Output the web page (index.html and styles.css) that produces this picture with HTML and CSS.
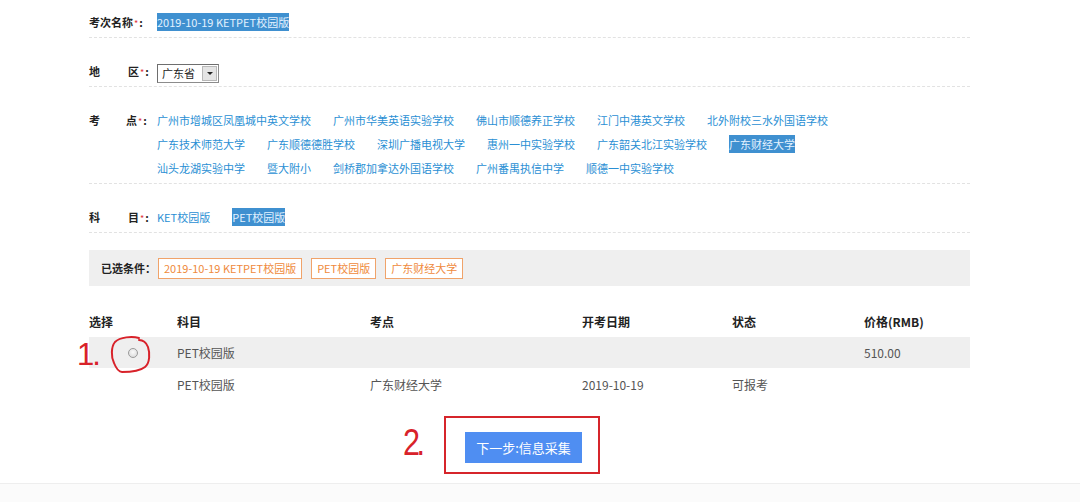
FILE: index.html
```html
<!DOCTYPE html>
<html lang="zh-CN">
<head>
<meta charset="utf-8">
<title>考次选择</title>
<link rel="stylesheet" href="styles.css">
</head>
<body>
<div class="page">
  <div class="form-row first">
    <div class="label">考次名称<span class="req">*</span>:</div>
    <div class="value"><span class="sel">2019-10-19 KETPET校园版</span></div>
  </div>
  <div class="form-row">
    <div class="label">地<span class="gap"></span>区<span class="req">*</span>:</div>
    <div class="value">
      <div class="select"><span class="select-text">广东省</span><span class="select-btn"><span class="tri"></span></span></div>
    </div>
  </div>
  <div class="form-row">
    <div class="label">考<span class="gap gap2"></span>点<span class="req">*</span>:</div>
    <div class="value links">
      <a class="lk">广州市增城区凤凰城中英文学校</a><a class="lk">广州市华美英语实验学校</a><a class="lk">佛山市顺德养正学校</a><a class="lk">江门中港英文学校</a><a class="lk">北外附校三水外国语学校</a><a class="lk">广东技术师范大学</a><a class="lk">广东顺德德胜学校</a><a class="lk">深圳广播电视大学</a><a class="lk">惠州一中实验学校</a><a class="lk">广东韶关北江实验学校</a><a class="lk"><span class="sel">广东财经大学</span></a><a class="lk">汕头龙湖实验中学</a><a class="lk">暨大附小</a><a class="lk">剑桥郡加拿达外国语学校</a><a class="lk">广州番禺执信中学</a><a class="lk">顺德一中实验学校</a>
    </div>
  </div>
  <div class="form-row">
    <div class="label">科<span class="gap"></span>目<span class="req">*</span>:</div>
    <div class="value links">
      <a class="lk">KET校园版</a><a class="lk"><span class="sel">PET校园版</span></a>
    </div>
  </div>

  <div class="chosen">
    <span class="chosen-label">已选条件：</span>
    <span class="tag">2019-10-19 KETPET校园版</span>
    <span class="tag">PET校园版</span>
    <span class="tag">广东财经大学</span>
  </div>

  <table class="tbl">
    <thead>
      <tr><th class="c1">选择</th><th class="c2">科目</th><th class="c3">考点</th><th class="c4">开考日期</th><th class="c5">状态</th><th class="c6">价格(RMB)</th></tr>
    </thead>
    <tbody>
      <tr class="grp"><td class="radio-cell"><span class="radio"></span></td><td>PET校园版</td><td></td><td></td><td></td><td>510.00</td></tr>
      <tr><td></td><td>PET校园版</td><td>广东财经大学</td><td>2019-10-19</td><td>可报考</td><td></td></tr>
    </tbody>
  </table>

  <div class="actions">
    <button class="btn">下一步:信息采集</button>
  </div>
</div>
<div class="footer"></div>

<div class="mark mark1">1.</div>
<svg class="circle-mark" width="46" height="40" viewBox="0 0 46 40">
  <path d="M31 3 C24 1 12 2 7 7 C3 12 3 22 6 28 C8 33 10 37 14 37 C20 37 32 36 37 32 C42 28 42 18 40 12 C38 7 35 5 31 5" fill="none" stroke="#d8222a" stroke-width="2" stroke-linecap="round"/>
</svg>
<div class="mark mark2">2.</div>
<div class="box-mark"></div>
</body>
</html>
```

FILE: styles.css
```css
html, body {
  margin: 0;
  padding: 0;
}
body {
  position: relative;
  background: #fff;
  font-family: "Noto Sans CJK SC", "Microsoft YaHei", sans-serif;
  font-size: 11px;
  color: #333;
  width: 1080px;
  height: 502px;
  overflow: hidden;
}
.page {
  width: 881px;
  margin-left: 89px;
}
.form-row {
  display: flex;
  padding: 21px 0 3px;
  line-height: 24px;
  border-bottom: 1px dashed #e2e2e2;
}
.form-row.first {
  padding-top: 10px;
}
.label {
  flex: none;
  width: 68px;
  font-weight: bold;
  color: #222;
  white-space: nowrap;
}
.req {
  color: #e0343a;
  font-weight: normal;
  font-size: 9px;
  line-height: 1;
  margin: 0 1px;
}
.gap {
  display: inline-block;
  width: 28px;
}
.gap2 {
  width: 26px;
}
.value {
  flex: none;
  width: 720px;
}
.sel {
  background: #3f90d0;
  color: #e3f2ff;
  padding: 1px 0;
}
.links .lk {
  color: #2a8fd4;
  margin-right: 22px;
  white-space: nowrap;
  cursor: pointer;
}
.select {
  display: inline-flex;
  align-items: center;
  box-sizing: border-box;
  height: 19px;
  width: 62px;
  border: 1px solid #8c8c8c;
  border-top-color: #6e6e6e;
  border-left-color: #6e6e6e;
  background: #fff;
  vertical-align: middle;
  line-height: 17px;
}
.select-text {
  flex: 1;
  padding-left: 4px;
  color: #222;
}
.select-btn {
  flex: none;
  width: 15px;
  height: 15px;
  margin-right: 1px;
  background: #e4e4e4;
  border: 1px solid #b8b8b8;
  box-sizing: border-box;
  display: flex;
  align-items: center;
  justify-content: center;
}
.tri {
  width: 0;
  height: 0;
  border-left: 3px solid transparent;
  border-right: 3px solid transparent;
  border-top: 3px solid #222;
}
.chosen {
  margin-top: 17px;
  height: 36px;
  background: #efefef;
  display: flex;
  align-items: center;
  padding-left: 12px;
}
.chosen-label {
  font-weight: bold;
  color: #222;
  margin-right: 2px;
}
.tag {
  border: 1px solid #f0a36a;
  color: #ef8a3c;
  background: #fff;
  height: 19px;
  line-height: 19px;
  padding: 0 5px;
  margin-right: 9px;
  white-space: nowrap;
}
.tbl {
  margin-top: 20px;
  width: 881px;
  border-collapse: collapse;
  table-layout: fixed;
  font-size: 12px;
}
.tbl th, .tbl td {
  text-align: left;
  padding: 0;
  height: 31px;
  line-height: 31px;
  font-weight: normal;
}
.tbl th {
  font-weight: bold;
  color: #222;
}
.tbl td {
  color: #555;
  height: 32px;
}
.c1 { width: 88px; }
.c2 { width: 193px; }
.c3 { width: 212px; }
.c4 { width: 150px; }
.c5 { width: 132px; }
.grp td {
  background: #efefef;
  height: 31px;
}
.radio-cell {
  padding-left: 39px !important;
}
.radio {
  display: inline-block;
  width: 10px;
  height: 10px;
  box-sizing: border-box;
  border-radius: 50%;
  border: 1px solid #9a9a9a;
  background: radial-gradient(circle at 50% 40%, #fafafa 0, #dcdcdc 80%);
  vertical-align: middle;
  margin-top: -3px;
}
.actions {
  margin-top: 32px;
  padding-left: 376px;
  height: 31px;
}
.btn {
  width: 117px;
  height: 31px;
  border: 0;
  background: #4f8ef2;
  color: #fff;
  font-family: "Noto Sans CJK SC", "Microsoft YaHei", sans-serif;
  font-size: 13px;
  padding: 0;
}
.footer {
  margin-top: 20px;
  border-top: 1px solid #eeeeee;
  background: #fbfbfb;
  height: 18px;
}
.mark {
  position: absolute;
  color: #d8222a;
  font-family: "Liberation Sans", Arial, sans-serif;
  line-height: 1;
}
.mark1 {
  left: 77px;
  top: 339px;
  font-size: 31px;
  letter-spacing: -2px;
}
.mark2 {
  left: 403px;
  top: 425px;
  font-size: 36px;
  letter-spacing: -4px;
  transform: scaleX(0.85);
  transform-origin: left top;
}
.circle-mark {
  position: absolute;
  left: 108px;
  top: 335px;
}
.box-mark {
  position: absolute;
  left: 444px;
  top: 416px;
  width: 152px;
  height: 54px;
  border: 2px solid #d6252b;
}
```
